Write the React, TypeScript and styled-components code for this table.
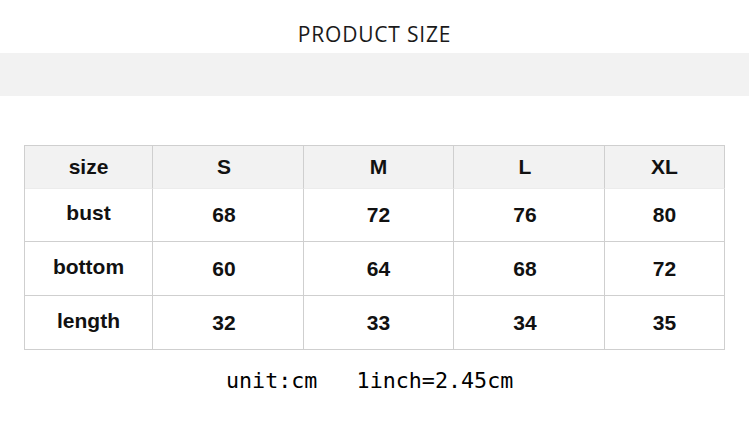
import styled, {createGlobalStyle} from 'styled-components';

// -----------------------------------------------------------------------------

// nudge: the source chart has some columns a few pixels left of centre
const COLUMNS = [
  {head: 'size', nudge: 0},
  {head: 'S', nudge: 8},
  {head: 'M', nudge: 0},
  {head: 'L', nudge: 8},
  {head: 'XL', nudge: 0}
];

const ROWS = [
  {label: 'bust', values: ['68', '72', '76', '80']},
  {label: 'bottom', values: ['60', '64', '68', '72']},
  {label: 'length', values: ['32', '33', '34', '35']}
];

// -----------------------------------------------------------------------------

const GlobalStyle = createGlobalStyle`
  html, body {
    margin: 0;
    padding: 0;
    background: #ffffff;
  }
`;

const Page = styled.div`
  width: 749px;
  height: 427px;
  display: flex;
  flex-direction: column;
  align-items: flex-start;
  background: #ffffff;
  overflow: hidden;
`;

const Title = styled.h1`
  align-self: stretch;
  margin: 24px 0 0;
  height: 21px;
  font-family: 'Open Sans', sans-serif;
  font-weight: 400;
  font-size: 21px;
  line-height: 21px;
  letter-spacing: 0.8px;
  text-align: center;
  color: #1a1a1a;
`;

const Band = styled.div`
  align-self: stretch;
  margin-top: 8px;
  height: 43px;
  background: #f2f2f2;
`;

const SizeTable = styled.div`
  margin: 49px 0 0 24px;
  display: grid;
  grid-template-columns: 128px 151px 150px 151px 120px;
  grid-template-rows: 43px 53px 54px 54px;
  border-top: 1px solid #cfcfcf;
  border-left: 1px solid #cfcfcf;
`;

const Cell = styled.div<{$head?: boolean; $label?: boolean; $nudge?: number}>`
  display: flex;
  align-items: center;
  justify-content: center;
  padding-bottom: ${p => (p.$label ? '4px' : '0')};
  padding-right: ${p => p.$nudge || 0}px;
  border-right: 1px solid #cfcfcf;
  border-bottom: 1px solid ${p => (p.$head ? '#ececec' : '#cfcfcf')};
  background: ${p => (p.$head ? '#f2f2f2' : '#ffffff')};
  font-family: 'Liberation Sans', Arial, sans-serif;
  font-weight: 700;
  font-size: 21px;
  color: #111111;
`;

const Footer = styled.p`
  margin: 20px 0 0 226px;
  height: 22px;
  font-family: 'DejaVu Sans Mono', monospace;
  font-size: 21.7px;
  line-height: 21px;
  white-space: pre;
  color: #000000;
`;

// -----------------------------------------------------------------------------

const App = () => (
  <Page>
    <GlobalStyle />
    <Title>PRODUCT SIZE</Title>
    <Band />

    <SizeTable>
      {COLUMNS.map(c => (
        <Cell key={c.head} $head $nudge={c.nudge}>
          {c.head}
        </Cell>
      ))}
      {ROWS.map(row => [
        <Cell key={row.label} $label>
          {row.label}
        </Cell>,
        ...row.values.map((v, i) => (
          <Cell key={row.label + i} $nudge={COLUMNS[i + 1].nudge}>
            {v}
          </Cell>
        ))
      ])}
    </SizeTable>

    <Footer>{'unit:cm   1inch=2.45cm'}</Footer>
  </Page>
);

// -----------------------------------------------------------------------------

export default App;
